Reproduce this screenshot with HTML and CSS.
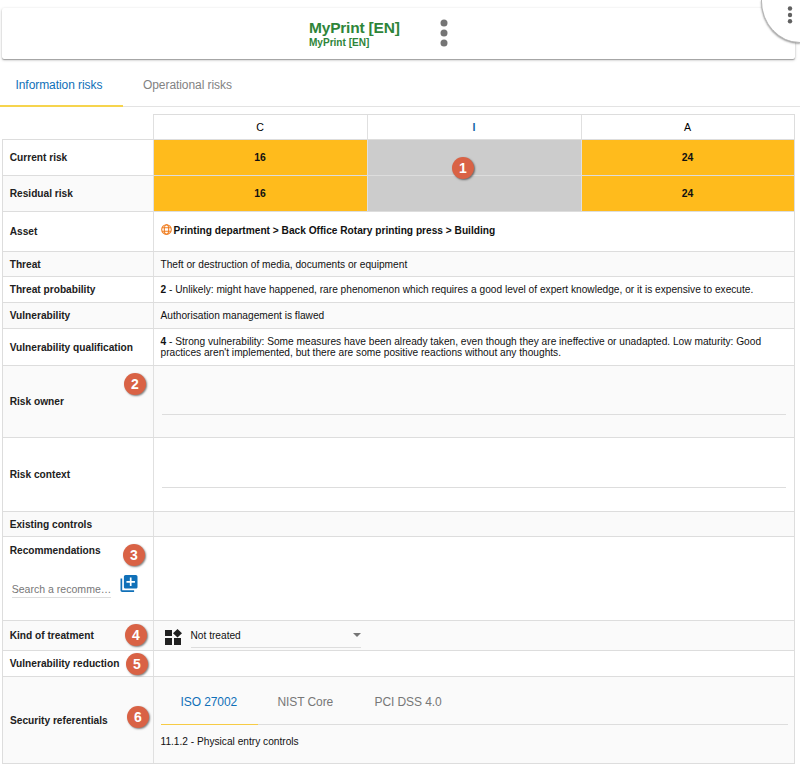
FILE: index.html
```html
<!DOCTYPE html>
<html lang="en">
<head>
<meta charset="utf-8">
<title>MyPrint [EN]</title>
<link rel="stylesheet" href="styles.css">
</head>
<body>
<header class="topbar">
  <div class="brand"><div class="brand-name"><span>MyPrint [EN]</span></div><div class="brand-sub"><span>MyPrint [EN]</span></div></div>
  <svg class="more" viewBox="0 0 8 28"><circle cx="4" cy="4" r="3.5"/><circle cx="4" cy="14" r="3.5"/><circle cx="4" cy="24" r="3.5"/></svg>
</header>
<div class="corner"><svg viewBox="0 0 6 18"><circle cx="3" cy="2.5" r="2.2"/><circle cx="3" cy="9" r="2.2"/><circle cx="3" cy="15.2" r="2.2"/></svg></div>
<nav class="tabs"><div class="tab active"><span>Information risks</span></div><div class="tab"><span>Operational risks</span></div></nav>
<main class="sheet">
  <div class="row cia head"><div class="blank"></div><div>C</div><div class="integrity">I</div><div>A</div></div>
  <div class="row cia risk"><div class="label"><span>Current risk</span></div><div class="amber">16</div><div class="gray"><i class="badge b1">1</i></div><div class="amber">24</div></div>
  <div class="row cia risk alt"><div class="label"><span>Residual risk</span></div><div class="amber">16</div><div class="gray"></div><div class="amber">24</div></div>
  <div class="row asset"><div class="label"><span>Asset</span></div><div class="value"><svg class="globe" viewBox="0 0 11 11"><circle cx="5.5" cy="5.5" r="4.8"/><ellipse cx="5.5" cy="5.5" rx="2.2" ry="4.8"/><path d="M1.2 3.7h8.6M1.2 7.3h8.6"/></svg><b>Printing department &gt; Back Office Rotary printing press &gt; Building</b></div></div>
  <div class="row threat alt"><div class="label"><span>Threat</span></div><div class="value"><span>Theft or destruction of media, documents or equipment</span></div></div>
  <div class="row prob"><div class="label"><span>Threat probability</span></div><div class="value"><span><b>2</b> - Unlikely: might have happened, rare phenomenon which requires a good level of expert knowledge, or it is expensive to execute.</span></div></div>
  <div class="row vuln alt"><div class="label"><span>Vulnerability</span></div><div class="value"><span>Authorisation management is flawed</span></div></div>
  <div class="row qual"><div class="label"><span>Vulnerability qualification</span></div><div class="value"><span><b>4</b> - Strong vulnerability: Some measures have been already taken, even though they are ineffective or unadapted. Low maturity: Good<br>practices aren't implemented, but there are some positive reactions without any thoughts.</span></div></div>
  <div class="row owner alt"><div class="label"><span>Risk owner</span><i class="badge b2">2</i></div><div class="value"><div class="field"></div></div></div>
  <div class="row context"><div class="label"><span>Risk context</span></div><div class="value"><div class="field"></div></div></div>
  <div class="row controls alt"><div class="label"><span>Existing controls</span></div><div class="value"></div></div>
  <div class="row recs"><div class="label"><span>Recommendations</span><i class="badge b3">3</i>
    <div class="search"><div class="input"><span>Search a recomme…</span></div><svg class="add" viewBox="2 2 20 20"><path d="M4 6H2v14c0 1.1.9 2 2 2h14v-2H4V6zm16-4H8c-1.100 0-2 .9-2 2v12c0 1.100.9 2 2 2h12c1.100 0 2-.9 2-2V4c0-1.100-.9-2-2-2zm-1 9h-4v4h-2v-4H9V9h4V5h2v4h4v2z"/></svg></div></div><div class="value"></div></div>
  <div class="row kind alt"><div class="label"><span>Kind of treatment</span><i class="badge b4">4</i></div><div class="value"><svg class="widgets" viewBox="0 0 17 16"><path d="M0 1h7v6H0zM0 9h7v7H0zM9 9h7v7H9zM12.500 0l4.500 4.200-4.500 4.200L8 4.200z"/></svg><div class="select"><span>Not treated</span><svg viewBox="0 0 8 4"><path d="M0 0h8L4 4z"/></svg></div></div></div>
  <div class="row reduction"><div class="label"><span>Vulnerability reduction</span><i class="badge b5">5</i></div><div class="value"></div></div>
  <div class="row refs alt"><div class="label"><span>Security referentials</span><i class="badge b6">6</i></div><div class="value"><div class="subtabs"><div class="subtab active"><span>ISO 27002</span></div><div class="subtab"><span>NIST Core</span></div><div class="subtab"><span>PCI DSS 4.0</span></div></div><div class="control"><span>11.1.2 - Physical entry controls</span></div></div></div>
</main>
</body>
</html>
```
FILE: styles.css
```css
* { box-sizing: border-box; }
body { margin: 0; height: 768px; position: relative; overflow: hidden; background: #fff; color: #212121; font: 10.16px/12px "Liberation Sans", Arial, sans-serif; }
.topbar { display: flex; margin: 8px 5px 0 2px; height: 51px; padding: 11px 0 0 307px; border-radius: 2px; box-shadow: 0 1px 3px rgba(0,0,0,.25), 0 1px 1px rgba(0,0,0,.25); }
.brand { width: 131px; color: #2e8539; font-weight: 700; }
.brand-name { font-size: 15.500px; line-height: 18px; letter-spacing: -.2px; }
.brand-sub { font-size: 10.050px; line-height: 11px; }
.more { width: 8px; height: 28px; fill: #757575; }
.corner { position: absolute; left: 761px; top: 0; width: 39px; height: 43px; border-radius: 0 0 0 39px / 0 0 0 42px; background: #fff; border: solid #b5b5b5; border-width: 0 0 1px 1px; box-shadow: 0 1px 2px rgba(0,0,0,.4); }
.corner svg { position: absolute; left: 25px; top: 6px; width: 6px; height: 18px; fill: #616161; }
.tabs { display: flex; height: 48px; border-bottom: 1px solid #e3e3e3; color: #828282; font-size: 12px; letter-spacing: -.07px; line-height: 16px; }
.tab { height: 48px; padding: 18px 20px 0; }
.tab.active { width: 123px; padding: 18px 0 0 15.500px; color: #1070b8; border-bottom: 2px solid #f6d44d; }
.sheet { display: grid; width: 793px; margin: 7px 0 0 2px; grid-template-rows: 25px 36px 36px 40px 25px 26px 26px 37px 72px 74px 25px 84px 30px 26px 88px; }
.row { display: grid; grid-template-columns: 150px 1fr; border: solid #ddd; border-width: 1px 1px 0; }
.row > div + div { border-left: 1px solid #e0e0e0; }
.cia { grid-template-columns: 150px 214px 214px 213px; }
.cia > div + div { display: flex; align-items: center; justify-content: center; font-weight: 700; color: #111; }
.risk > div + div { padding: 1px 1px 0 0; font-size: 10.400px; }
.head { margin-left: 151px; border-left: 0; grid-template-columns: 0 214px 214px 213px; }
.head > div + div { padding-right: 1px; font-weight: 400; font-size: 10.600px; color: #000; }
.head > .integrity { color: #1565a8; font-weight: 700; }
.amber { background: #ffbb1c; }
.gray { background: #ccc; position: relative; }
.alt { background: #fafafa; }
.label { position: relative; display: flex; align-items: center; padding: 0 0 0 6.700px; font-weight: 700; white-space: nowrap; }
.risk .label, .threat .label, .qual .label, .controls .label { padding-top: 1px; }
.value { display: flex; align-items: center; padding-left: 6.500px; white-space: nowrap; min-width: 0; line-height: 11px; color: #111; }
.asset .value { padding-bottom: 2px; }
.globe { width: 11px; height: 11px; margin: -2px 2px 0 0; fill: none; stroke: #ef7d20; stroke-width: 1.100; }
.field { width: 624px; height: 24px; margin: 3px 0 0 1.300px; border-bottom: 1px solid #ddd; }
.context .field { margin-top: 2px; }
.recs .label { display: block; padding-top: 8px; }
.search { display: flex; height: 30px; margin-top: 15px; }
.input { width: 99px; margin-left: 2px; padding: 11px 0 0; height: 26px; border-bottom: 1px solid #ddd; font-size: 10.550px; font-weight: 400; color: #777; }
.add { width: 18px; height: 17px; margin: 3px 0 0 9.500px; fill: #1070b8; }
.widgets { width: 17px; height: 16px; margin: 2px 0 0 4px; fill: #212121; }
.select { display: flex; align-items: center; justify-content: space-between; width: 170px; height: 24px; margin: 0 0 0 9px; border-bottom: 1px solid #ddd; }
.select svg { width: 8px; height: 4px; fill: #757575; }
.refs { border-bottom-width: 1px; }
.refs .label { padding: 1px 0 0 7px; }
.refs .value { display: block; padding-top: 0; }
.subtabs { display: flex; width: 627px; height: 48px; border-bottom: 1px solid #ddd; font-size: 12px; letter-spacing: -.09px; color: #777; }
.subtab { width: 97px; padding: 20px 0 0 20px; }
.subtab.active { height: 48px; color: #1070b8; border-bottom: 1px solid #f6cb45; }
.control { margin-top: 11px; }
.badge { position: absolute; z-index: 1; width: 22px; height: 22px; border-radius: 50%; background: #d96245; color: #fff; box-shadow: 1px 1px 2px rgba(0,0,0,.5); font: 700 14px/22px "Liberation Sans", Arial, sans-serif; text-align: center; }
.b1 { left: 84px; top: 17px; }
.b2 { left: 121px; top: 7px; }
.b3 { left: 120px; top: 7px; }
.b4 { left: 122px; top: 3px; }
.b5 { left: 123px; top: 2px; }
.b6 { left: 124px; top: 29px; }
```
